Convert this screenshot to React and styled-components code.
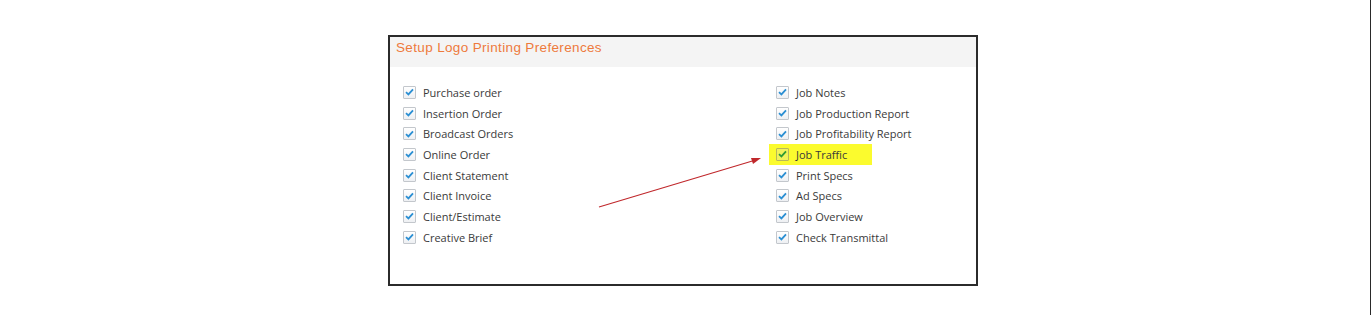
import React from "react";
import styled, { createGlobalStyle } from "styled-components";

const Global = createGlobalStyle`
  html, body { margin: 0; padding: 0; background: #fff; }
  body { font-family: "Open Sans", "Liberation Sans", sans-serif; }
`;

const Page = styled.div`
  position: relative;
  box-sizing: border-box;
  width: 1371px;
  height: 315px;
  border-right: 1px solid #2a2a2a;
  padding: 35px 0 0 388px;
`;

const Panel = styled.section`
  position: relative;
  box-sizing: border-box;
  width: 590px;
  height: 251px;
  border: 2px solid #2b2b2b;
  background: #fff;
`;

const Header = styled.header`
  height: 30px;
  background: #f4f4f4;
  display: flex;
  align-items: flex-start;
  padding: 3px 0 0 6px;
  box-sizing: border-box;
  font-family: "Liberation Sans", Arial, sans-serif;
  font-size: 13.5px;
  color: #ee7a3c;
  letter-spacing: 0.35px;
`;

const Columns = styled.div`
  display: grid;
  grid-template-columns: 373px 1fr;
  padding: 15px 0 0 13px;
`;

const List = styled.ul`
  list-style: none;
  margin: 0;
  padding: 0;
  display: flex;
  flex-direction: column;
`;

const Item = styled.li`
  height: 20.7px;
  display: flex;
  align-items: center;
`;

const Label = styled.span`
  display: inline-flex;
  align-items: center;
  gap: 7px;
  font-size: 11px;
  color: #3a3a3a;
  padding: ${(p) => (p.$highlight ? "0 25px 0 7px" : "0")};
  margin-left: ${(p) => (p.$highlight ? "-7px" : "0")};
  height: ${(p) => (p.$highlight ? "21px" : "auto")};
  background: ${(p) => (p.$highlight ? "#fbfb2e" : "transparent")};
`;

const Box = styled.span`
  box-sizing: border-box;
  width: 13px;
  height: 13px;
  border: 1px solid ${(p) => (p.$highlight ? "#b8b85a" : "#c3c7cc")};
  background: ${(p) => (p.$highlight ? "#f2f25a" : "linear-gradient(#ffffff, #eef0f3)")};
  border-radius: 1px;
  display: inline-flex;
  align-items: center;
  justify-content: center;
`;

const ArrowLayer = styled.svg`
  position: absolute;
  left: 0;
  top: 0;
  pointer-events: none;
`;

const left = [
  "Purchase order",
  "Insertion Order",
  "Broadcast Orders",
  "Online Order",
  "Client Statement",
  "Client Invoice",
  "Client/Estimate",
  "Creative Brief",
];

const right = [
  "Job Notes",
  "Job Production Report",
  "Job Profitability Report",
  "Job Traffic",
  "Print Specs",
  "Ad Specs",
  "Job Overview",
  "Check Transmittal",
];

function Check({ highlight }) {
  return (
    <Box $highlight={highlight}>
      <svg width="9" height="8" viewBox="0 0 9 8">
        <path
          d="M1 4.2 L3.4 6.4 L8 1.4"
          fill="none"
          stroke={highlight ? "#2f9a35" : "#2b8fd3"}
          strokeWidth="1.8"
        />
      </svg>
    </Box>
  );
}

function Column({ items }) {
  return (
    <List>
      {items.map((t) => {
        const hl = t === "Job Traffic";
        return (
          <Item key={t}>
            <Label $highlight={hl}>
              <Check highlight={hl} />
              {t}
            </Label>
          </Item>
        );
      })}
    </List>
  );
}

export default function App() {
  return (
    <>
      <Global />
      <Page>
        <Panel>
          <Header>Setup Logo Printing Preferences</Header>
          <Columns>
            <Column items={left} />
            <Column items={right} />
          </Columns>
          <ArrowLayer width="590" height="251" viewBox="0 0 590 251">
            <line x1="209" y1="170" x2="364" y2="123.5" stroke="#c0282c" strokeWidth="1.2" />
            <polygon points="371,121 361,121 363,127" fill="#c0282c" />
          </ArrowLayer>
        </Panel>
      </Page>
    </>
  );
}
